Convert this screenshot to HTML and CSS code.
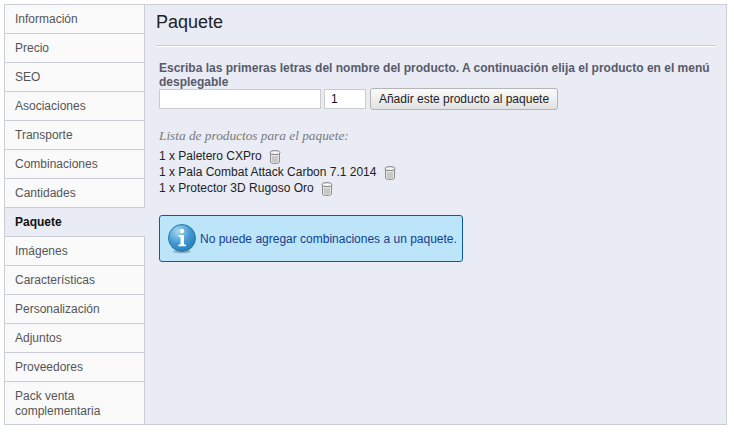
FILE: index.html
```html
<!DOCTYPE html>
<html lang="es">
<head>
<meta charset="utf-8">
<title>Paquete</title>
<link rel="stylesheet" href="styles.css">
</head>
<body>
<div class="shell">
  <nav class="tabs">
    <a class="tab">Información</a>
    <a class="tab">Precio</a>
    <a class="tab">SEO</a>
    <a class="tab">Asociaciones</a>
    <a class="tab">Transporte</a>
    <a class="tab">Combinaciones</a>
    <a class="tab">Cantidades</a>
    <a class="tab active">Paquete</a>
    <a class="tab">Imágenes</a>
    <a class="tab">Características</a>
    <a class="tab">Personalización</a>
    <a class="tab">Adjuntos</a>
    <a class="tab">Proveedores</a>
    <a class="tab last">Pack venta complementaria</a>
  </nav>
  <main class="panel">
    <h2 class="title">Paquete</h2>
    <div class="rule"></div>
    <p class="hint">Escriba las primeras letras del nombre del producto. A continuación elija el producto en el menú desplegable</p>
    <div class="form-row">
      <input class="field name" type="text">
      <input class="field qty" type="text" value="1">
      <button class="btn" type="button">Añadir este producto al paquete</button>
    </div>
    <p class="list-title">Lista de productos para el paquete:</p>
    <ul class="items">
      <li class="item">1 x Paletero CXPro <svg class="bin" viewBox="0 0 12 14"><use href="#bin"/></svg></li>
      <li class="item">1 x Pala Combat Attack Carbon 7.1 2014 <svg class="bin" viewBox="0 0 12 14"><use href="#bin"/></svg></li>
      <li class="item">1 x Protector 3D Rugoso Oro <svg class="bin" viewBox="0 0 12 14"><use href="#bin"/></svg></li>
    </ul>
    <div class="notice">
      <svg class="info" viewBox="0 0 30 30">
        <defs>
          <radialGradient id="ball" cx="0.35" cy="0.25" r="0.85">
            <stop offset="0" stop-color="#a6d8f2"/>
            <stop offset="0.55" stop-color="#3f97d3"/>
            <stop offset="1" stop-color="#2478ad"/>
          </radialGradient>
        </defs>
        <ellipse cx="15" cy="27.500" rx="9" ry="1.800" fill="#8fb0c0"/>
        <circle cx="15" cy="14" r="13.500" fill="url(#ball)" stroke="#2b7ba8"/>
        <circle cx="15" cy="7" r="2.200" fill="#fff"/>
        <path d="M11.500 11h5.500v9.500h2v1.800h-7.500v-1.800h2v-7.700h-2z" fill="#fff"/>
      </svg>
      <span class="notice-text">No puede agregar combinaciones a un paquete.</span>
    </div>
  </main>
</div>
<svg class="defs" width="0" height="0">
  <symbol id="bin" viewBox="0 0 12 14">
    <path d="M1.500 3v9c0 .8 2 1.500 4.500 1.500s4.500-.7 4.500-1.500V3z" fill="#e6e6e6" stroke="#8b8b8b"/>
    <ellipse cx="6" cy="2.600" rx="5" ry="2" fill="#f6f6f6" stroke="#808080"/>
    <path d="M4 6v6M6 6.500v6M8 6v6" stroke="#a8a8a8" fill="none"/>
  </symbol>
</svg>
</body>
</html>
```
FILE: styles.css
```css
* { box-sizing: border-box; }
html, body { margin: 0; padding: 0; }
body {
  width: 734px;
  height: 436px;
  background: #fff;
  padding: 4px 7px 0 4px;
  font-family: "Liberation Sans", Arial, sans-serif;
  font-size: 12px;
  overflow: hidden;
}
.shell {
  display: flex;
  width: 723px;
  height: 421px;
  border: 1px solid #ccced7;
  background: #e9ecf5;
}
.tabs {
  width: 140px;
  flex: none;
  display: flex;
  flex-direction: column;
  border-right: 1px solid #ccced7;
  background: #fafafa;
}
.tab {
  height: 29px;
  flex: none;
  padding: 0 10px;
  line-height: 28px;
  color: #555;
  border-bottom: 1px solid #ccced7;
}
.tab.active {
  background: #e9ecf5;
  color: #111;
  font-weight: bold;
  margin-right: -1px;
  position: relative;
}
.tab.last {
  height: auto;
  flex: 1;
  border-bottom: 0;
  padding-top: 7px;
  line-height: 15px;
}
.panel {
  flex: 1;
  padding: 6px 10px 0 11px;
  color: #111;
}
.title {
  margin: 0;
  font-size: 18px;
  font-weight: normal;
  line-height: 22px;
  color: #222;
}
.rule {
  height: 2px;
  margin-top: 12px;
  border-top: 1px solid #ccc;
  border-bottom: 1px solid #fff;
}
.hint {
  margin: 14px 0 0 3px;
  font-weight: bold;
  line-height: 14px;
  color: #585a69;
}
.form-row {
  display: flex;
  margin: -1px 0 0 3px;
  height: 22px;
  align-items: flex-start;
}
.field {
  height: 20px;
  margin: 1px 0 0;
  padding: 0 6px;
  font: 12px "Liberation Sans", Arial, sans-serif;
  color: #111;
  background: #fff;
  border: 1px solid #ccc;
  border-radius: 0;
  outline: 0;
}
.name { width: 162px; margin-right: 3px; }
.qty { width: 42px; margin-right: 4px; }
.btn {
  width: 188px;
  height: 22px;
  padding: 0;
  font: 12px "Liberation Sans", Arial, sans-serif;
  color: #222;
  background: linear-gradient(#fbfbfb, #e2e2e2);
  border: 1px solid #b5b5b5;
  border-radius: 3px;
}
.list-title {
  margin: 18px 0 0 3px;
  font-family: "Liberation Serif", Georgia, serif;
  font-style: italic;
  font-size: 13.300px;
  line-height: 16px;
  color: #7a7a7a;
}
.items {
  list-style: none;
  margin: 4px 0 0 3px;
  padding: 0;
}
.item {
  height: 16px;
  line-height: 16px;
  color: #222;
  white-space: nowrap;
}
.bin {
  width: 12px;
  height: 14px;
  margin-left: 4px;
  vertical-align: -4px;
}
.defs { position: absolute; }
.notice {
  display: flex;
  align-items: center;
  width: 304px;
  height: 47px;
  margin: 19px 0 0 3px;
  padding: 0 0 0 7px;
  background: #bce5f9;
  border: 1px solid #0a5aa8;
  border-radius: 3px;
}
.info {
  width: 30px;
  height: 30px;
  flex: none;
  margin-right: 3px;
}
.notice-text {
  color: #13408f;
  white-space: nowrap;
}
```
